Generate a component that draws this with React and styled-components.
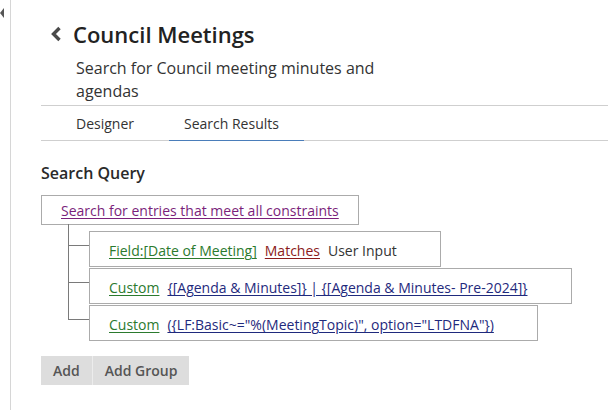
import React from "react";
import styled, { createGlobalStyle } from "styled-components";

const GlobalStyle = createGlobalStyle`
  html, body {
    margin: 0;
    padding: 0;
    background: #ffffff;
  }
  body {
    font-family: "Open Sans", "Noto Sans", sans-serif;
    color: #333333;
  }
`;

const Page = styled.div`
  display: flex;
  width: 608px;
  height: 410px;
  overflow: hidden;
`;

const Gutter = styled.div`
  flex: 0 0 11px;
  border-right: 1px solid #d6d6d6;
  padding-top: 8px;
  box-sizing: border-box;
`;

const CollapseArrow = styled.div`
  width: 0;
  height: 0;
  border-top: 5px solid transparent;
  border-bottom: 5px solid transparent;
  border-right: 4px solid #555555;
`;

const Main = styled.div`
  flex: 1;
  padding-left: 30px;
`;

const Header = styled.div`
  padding-top: 19px;
  padding-bottom: 2px;
  border-bottom: 1px solid #cfcfcf;
`;

const TitleRow = styled.div`
  display: flex;
  align-items: center;
  gap: 11px;
  margin-left: 9px;
`;

const BackButton = styled.svg`
  width: 12px;
  height: 16px;
  flex: 0 0 auto;
`;

const Title = styled.h1`
  margin: 0;
  font-size: 22px;
  line-height: 30px;
  font-weight: 600;
  color: #222222;
`;

const Subtitle = styled.p`
  margin: 8px 0 0 35px;
  width: 310px;
  font-size: 16px;
  line-height: 23px;
  color: #333333;
`;

const TabBar = styled.div`
  display: flex;
  border-bottom: 1px solid #cfcfcf;
  padding-left: 20px;
`;

const Tab = styled.div`
  box-sizing: border-box;
  width: ${props => props.width}px;
  height: 35px;
  padding-left: 15px;
  font-size: 14px;
  line-height: 35px;
  color: #333333;
  margin-bottom: -1px;
  border-bottom: 1px solid ${props => (props.active ? "#4a7dba" : "transparent")};
`;

const SectionTitle = styled.h2`
  margin: 21px 0 0;
  font-size: 16px;
  line-height: 22px;
  font-weight: 600;
  color: #2a2a2a;
`;

const Tree = styled.div`
  margin-top: 11px;
`;

const RootNode = styled.div`
  display: inline-flex;
  box-sizing: border-box;
  height: 30px;
  padding: 2px 19px 0;
  border: 1px solid #ababab;
  font-size: 14px;
  line-height: 26px;
`;

const Children = styled.div`
  display: flex;
  flex-direction: column;
  align-items: flex-start;
  gap: 1px;
  margin: 6px 0 0 27px;
`;

const ChildRow = styled.div`
  position: relative;
  margin-left: 21px;

  &::before {
    content: "";
    position: absolute;
    left: -21px;
    top: 14px;
    width: 21px;
    border-top: 1px solid #7a7a7a;
  }

  &::after {
    content: "";
    position: absolute;
    left: -21px;
    top: -7px;
    bottom: -1px;
    border-left: 1px solid #7a7a7a;
  }

  &:last-child::after {
    bottom: auto;
    height: 22px;
  }
`;

const ConditionBox = styled.div`
  display: flex;
  align-items: center;
  gap: 8px;
  box-sizing: border-box;
  height: 36px;
  padding: 3px 43px 0 19px;
  border: 1px solid #ababab;
  font-size: 14px;
  line-height: 31px;
  white-space: nowrap;
`;

const LinkText = styled.span`
  color: ${props => props.color};
  text-decoration: underline;
  text-underline-offset: 2px;
  cursor: pointer;
`;

const PlainText = styled.span`
  color: #333333;
`;

const ButtonRow = styled.div`
  display: flex;
  margin-top: 15px;
`;

const Button = styled.button`
  height: 29px;
  padding: 0 12px;
  border: none;
  border-left: ${props => (props.joined ? "1px solid #ececec" : "none")};
  background: #dddddd;
  font-family: "Open Sans", "Noto Sans", sans-serif;
  font-size: 14px;
  font-weight: 600;
  color: #555555;
  cursor: pointer;
`;

const COLORS = {
  root: "#7b1f7b",
  field: "#2b7a2e",
  operator: "#8b1a1a",
  value: "#1f2a7d"
};

const conditions = [
  {
    label: "Field:[Date of Meeting]",
    operator: "Matches",
    plain: "User Input"
  },
  {
    label: "Custom",
    value: "{[Agenda & Minutes]} | {[Agenda & Minutes- Pre-2024]}"
  },
  {
    label: "Custom",
    value: '({LF:Basic~="%(MeetingTopic)", option="LTDFNA"})'
  }
];

const BackIcon = () => (
  <BackButton viewBox="0 0 12 16">
    <polyline
      points="9.5,2 3.5,8 9.5,14"
      fill="none"
      stroke="#4a4a4a"
      strokeWidth="3.4"
      strokeLinejoin="miter"
    />
  </BackButton>
);

const App = () => (
  <Page>
    <GlobalStyle />
    <Gutter>
      <CollapseArrow />
    </Gutter>
    <Main>
      <Header>
        <TitleRow>
          <BackIcon />
          <Title>Council Meetings</Title>
        </TitleRow>
        <Subtitle>Search for Council meeting minutes and agendas</Subtitle>
      </Header>
      <TabBar>
        <Tab width={108}>Designer</Tab>
        <Tab width={135} active>
          Search Results
        </Tab>
      </TabBar>

      <SectionTitle>Search Query</SectionTitle>
      <Tree>
        <RootNode>
          <LinkText color={COLORS.root}>
            Search for entries that meet all constraints
          </LinkText>
        </RootNode>
        <Children>
          {conditions.map((c, i) => (
            <ChildRow key={i}>
              <ConditionBox>
                <LinkText color={COLORS.field}>{c.label}</LinkText>
                {c.operator && (
                  <LinkText color={COLORS.operator}>{c.operator}</LinkText>
                )}
                {c.plain && <PlainText>{c.plain}</PlainText>}
                {c.value && <LinkText color={COLORS.value}>{c.value}</LinkText>}
              </ConditionBox>
            </ChildRow>
          ))}
        </Children>
      </Tree>

      <ButtonRow>
        <Button>Add</Button>
        <Button joined>Add Group</Button>
      </ButtonRow>
    </Main>
  </Page>
);

export default App;
